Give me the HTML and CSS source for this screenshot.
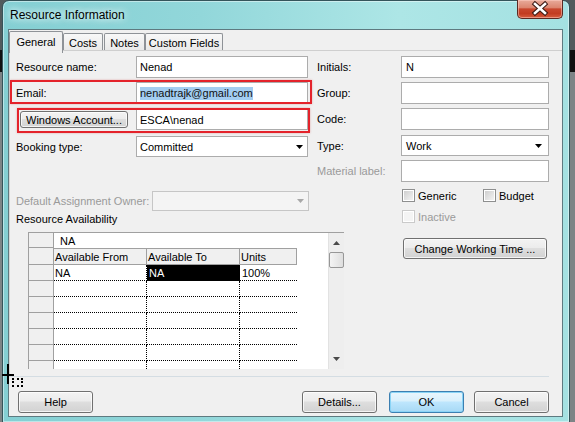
FILE: index.html
```html
<!DOCTYPE html>
<html>
<head>
<meta charset="utf-8">
<title>Resource Information</title>
<link rel="stylesheet" href="styles.css">
</head>
<body>
<div class="window">
  <div class="titlebar">
    <span class="title">Resource Information</span>
    <div class="close">
      <svg width="44" height="18" viewBox="0 0 44 18">
        <path d="M17 4 L27 13 M27 4 L17 13" stroke="#3b1a14" stroke-width="4.6" stroke-linecap="square" fill="none"/>
        <path d="M17 4 L27 13 M27 4 L17 13" stroke="#ffffff" stroke-width="2.6" stroke-linecap="square" fill="none"/>
      </svg>
    </div>
  </div>
  <div class="client">
    <div class="tabs">
      <div class="tab active t-gen">General</div>
      <div class="tab t-costs">Costs</div>
      <div class="tab t-notes">Notes</div>
      <div class="tab t-custom">Custom Fields</div>
    </div>
    <div class="panel">
      <div class="col-left">
        <div class="row r1"><span class="lbl">Resource name:</span><div class="field">Nenad</div></div>
        <div class="row r2 mark-email"><span class="lbl">Email:</span><div class="field"><span class="hl">nenadtrajk@gmail.com</span></div></div>
        <div class="row r3 mark-win"><button class="btn btn-win">Windows Account...</button><div class="field">ESCA\nenad</div></div>
        <div class="row r4"><span class="lbl">Booking type:</span><div class="field combo">Committed<svg class="arrow" width="7" height="4" viewBox="0 0 7 4"><polygon points="0,0 7,0 3.5,4" fill="#000"/></svg></div></div>
        <div class="row owner"><span class="lbl lbl-owner dis">Default Assignment Owner:</span><div class="field combo combo-dis"><svg class="arrow" width="7" height="4" viewBox="0 0 7 4"><polygon points="0,0 7,0 3.5,4" fill="#a8a8a8"/></svg></div></div>
        <div class="avail-lbl">Resource Availability</div>
        <div class="grid-wrap">
          <div class="grid">
            <div class="rh"></div><div class="edit">NA</div>
            <div class="rh"></div><div class="hd">Available From</div><div class="hd">Available To</div><div class="hd">Units</div><div class="blank"></div>
            <div class="rh"></div><div class="c">NA</div><div class="c cur">NA</div><div class="c u">100%</div><div class="blank"></div>
            <div class="rh"></div><div class="c"></div><div class="c"></div><div class="c u"></div><div class="blank"></div>
            <div class="rh"></div><div class="c"></div><div class="c"></div><div class="c u"></div><div class="blank"></div>
            <div class="rh"></div><div class="c"></div><div class="c"></div><div class="c u"></div><div class="blank"></div>
            <div class="rh"></div><div class="c"></div><div class="c"></div><div class="c u"></div><div class="blank"></div>
            <div class="rh"></div><div class="c"></div><div class="c"></div><div class="c u"></div><div class="blank"></div>
            <div class="rh"></div><div class="c"></div><div class="c"></div><div class="c u"></div><div class="blank"></div>
          </div>
          <div class="vscroll">
            <svg class="sc-up" width="7" height="4" viewBox="0 0 7 4"><polygon points="0,4 7,4 3.5,0" fill="#4a4a4a"/></svg>
            <div class="thumb"></div>
            <svg class="sc-down" width="7" height="4" viewBox="0 0 7 4"><polygon points="0,0 7,0 3.5,4" fill="#4a4a4a"/></svg>
          </div>
        </div>
      </div>
      <div class="col-right">
        <div class="rrow"><span class="rlbl">Initials:</span><div class="field rfield">N</div></div>
        <div class="rrow rr2"><span class="rlbl">Group:</span><div class="field rfield"></div></div>
        <div class="rrow rr3"><span class="rlbl">Code:</span><div class="field rfield"></div></div>
        <div class="rrow rr4"><span class="rlbl">Type:</span><div class="field rfield combo">Work<svg class="arrow arrow-r" width="7" height="4" viewBox="0 0 7 4"><polygon points="0,0 7,0 3.5,4" fill="#000"/></svg></div></div>
        <div class="rrow rr5"><span class="rlbl dis">Material label:</span><div class="field rfield"></div></div>
        <div class="chkrow">
          <div class="chkitem chk-generic"><span class="chk"></span><span class="chktxt">Generic</span></div>
          <div class="chkitem"><span class="chk"></span><span class="chktxt">Budget</span></div>
        </div>
        <div class="chkrow chkrow2">
          <div class="chkitem"><span class="chk chk-dis"></span><span class="chktxt dis">Inactive</span></div>
        </div>
        <button class="btn btn-cwt">Change Working Time ...</button>
      </div>
    </div>
    <div class="sep"></div>
    <div class="footer">
      <button class="btn btn-main">Help</button>
      <button class="btn btn-main btn-details">Details...</button>
      <button class="btn btn-main btn-ok">OK</button>
      <button class="btn btn-main btn-cancel">Cancel</button>
    </div>
  </div>
</div>
<div class="cursor">
  <div class="cross-v"></div>
  <div class="cross-h"></div>
  <div class="dotbox"></div>
</div>
</body>
</html>
```

FILE: styles.css
```css
* { box-sizing: border-box; }
html, body { margin: 0; padding: 0; }
body {
  width: 575px;
  height: 422px;
  overflow: hidden;
  position: relative;
  font-family: "Liberation Sans", Arial, sans-serif;
  font-size: 11px;
  color: #000;
  background: linear-gradient(#525a5c 0, #525a5c 50px, #111 50px, #111 72px, #7d8486 72px, #7d8486 100%);
}

.window {
  margin-left: 2px;
  width: 568px;
  height: 423px;
  border: 1px solid #34555b;
  border-radius: 7px 7px 0 0;
  padding: 0 6px 5px 5px;
  background: linear-gradient(90deg, #84cfd3 0%, #92d7da 35%, #ade6e6 70%, #a4e1e2 100%);
  box-shadow: inset 0 0 0 1px rgba(255, 255, 255, 0.45);
}

.titlebar {
  height: 28px;
  display: flex;
}
.title {
  align-self: center;
  margin-left: 2px;
  margin-top: -1px;
  font-size: 12px;
  text-shadow: 0 0 6px #eaffff, 0 0 10px #eaffff;
}
.close {
  margin-left: auto;
  margin-top: -1px;
  width: 46px;
  height: 19px;
  border: 1px solid #5a2a22;
  border-top: 0;
  border-radius: 0 0 5px 5px;
  background: linear-gradient(#e8ab9b 0%, #dc8670 42%, #c8472e 50%, #c23c21 75%, #d65d3e 100%);
  box-shadow: inset 0 0 0 1px rgba(255, 210, 200, 0.5);
}
.close svg { display: block; }

.client {
  height: 388px;
  border: 1px solid #5e7a80;
  background: #f0f0f0;
  display: flex;
  flex-direction: column;
}

/* tabs */
.tabs {
  height: 20px;
  display: flex;
  flex: none;
}
.tab {
  height: 17px;
  margin-top: 3px;
  padding-top: 1px;
  border: 1px solid #8e9297;
  border-bottom: 0;
  border-radius: 2px 2px 0 0;
  background: linear-gradient(#f8f8f8, #e9e9e9);
  display: flex;
  align-items: center;
  justify-content: center;
  white-space: nowrap;
}
.tab.active {
  height: 22px;
  margin-top: 1px;
  padding-top: 0;
  padding-bottom: 2px;
  background: #f0f0f0;
  position: relative;
  z-index: 1;
}
.t-gen { width: 54px; }
.t-costs { width: 40px; }
.t-notes { width: 41px; margin-left: 1px; }
.t-custom { width: 78px; }

/* panel */
.panel {
  flex: none;
  width: 553px;
  height: 326px;
  border-top: 1px solid #cfcfcf;
  border-left: 1px solid #d6d6d6;
  padding: 5px 0 0 6px;
  display: flex;
}
.col-left {
  width: 296px;
  flex: none;
  display: flex;
  flex-direction: column;
}
.col-right {
  width: 232px;
  margin-left: 5px;
  flex: none;
  display: flex;
  flex-direction: column;
}

.row {
  display: flex;
  align-items: center;
  width: 296px;
  flex: none;
}
.r1 { height: 22px; }
.r2 { height: 22px; margin-top: 4px; }
.r3 { height: 21px; margin-top: 5px; }
.r4 { height: 21px; margin-top: 6px; }
.owner { height: 20px; margin-top: 34px; }

.lbl {
  width: 120px;
  flex: none;
  line-height: 14px;
  white-space: nowrap;
}
.lbl-owner { width: 136px; }
.dis { color: #9a9a9a; }

.field {
  height: 100%;
  width: 172px;
  flex: none;
  border: 1px solid #acacac;
  background: #fff;
  display: flex;
  align-items: center;
  padding-left: 3px;
  white-space: nowrap;
}
.owner .field { width: 157px; }
.combo .arrow { margin-left: auto; margin-right: 4px; display: block; }
.combo .arrow-r { margin-right: 6px; }
.combo-dis { background: #f4f4f4; border-color: #c6c6c6; }

.hl {
  background: #a3cdf1;
  color: #111;
  line-height: 13px;
}

/* annotation boxes */
.mark-email, .mark-win { position: relative; }
.mark-email::after, .mark-win::after {
  content: "";
  position: absolute;
  border: 2px solid #e4232b;
  box-shadow: 0 0 2px rgba(200, 40, 40, 0.35);
  pointer-events: none;
}
.mark-email::after { left: -6px; right: 0; top: -2px; bottom: 0; }
.mark-win::after { left: 1px; right: 2px; top: -1px; bottom: -3px; }

.btn {
  font: inherit;
  color: #000;
  padding: 0;
  border: 1px solid #707070;
  border-radius: 3px;
  background: linear-gradient(#f3f3f3 0%, #ececec 45%, #dedede 50%, #d2d2d2 100%);
  box-shadow: inset 0 0 0 1px rgba(255, 255, 255, 0.75);
  white-space: nowrap;
}
.btn-win {
  width: 108px;
  height: 17px;
  margin-left: 4px;
  margin-right: 8px;
  flex: none;
}

.avail-lbl {
  margin-top: 1px;
  line-height: 14px;
}

/* grid */
.grid-wrap {
  margin-top: 6px;
  margin-left: 12px;
  width: 316px;
  height: 137px;
  flex: none;
  display: flex;
  border-top: 1px solid #a0a0a0;
  border-left: 1px solid #a0a0a0;
}
.grid {
  flex: 1;
  display: grid;
  grid-template-columns: 25px 93px 93px 57px 1fr;
  grid-template-rows: 15px 17px;
  grid-auto-rows: 16px;
  align-content: start;
  overflow: hidden;
  background: #fff;
}
.rh {
  background: #f0f0f0;
  border-right: 1px solid #a0a0a0;
  border-bottom: 1px solid #a0a0a0;
}
.edit {
  grid-column: 2 / -1;
  padding-left: 6px;
  display: flex;
  align-items: center;
}
.hd {
  background: #f0f0f0;
  border-top: 1px solid #a0a0a0;
  border-right: 1px solid #a0a0a0;
  border-bottom: 1px solid #a0a0a0;
  padding-left: 1px;
  display: flex;
  align-items: center;
  white-space: nowrap;
  overflow: hidden;
}
.c {
  border-right: 1px dotted #000;
  border-bottom: 1px dotted #000;
  padding-left: 1px;
  display: flex;
  align-items: center;
}
.c.u { border-right: 0; padding-left: 2px; }
.c.cur { background: #000; color: #fff; padding-left: 2px; }
.blank { background: #fff; }

.vscroll {
  width: 16px;
  flex: none;
  background: #eeeeee;
  border-left: 1px solid #e2e2e2;
  display: flex;
  flex-direction: column;
  align-items: center;
}
.vscroll svg { display: block; }
.sc-up { margin-top: 8px; }
.thumb {
  margin-top: 7px;
  width: 15px;
  height: 16px;
  margin-left: -1px;
  border: 1px solid #979797;
  border-radius: 2px;
  background: linear-gradient(90deg, #f4f4f4, #dedede);
}
.sc-down { margin-top: auto; margin-bottom: 8px; }

/* right column */
.rrow {
  display: flex;
  align-items: center;
  height: 22px;
  flex: none;
}
.rr2 { margin-top: 4px; }
.rr3 { margin-top: 4px; }
.rr4 { margin-top: 5px; height: 21px; }
.rr5 { margin-top: 4px; }
.rlbl {
  width: 84px;
  flex: none;
  line-height: 14px;
  white-space: nowrap;
}
.rfield { width: 148px; padding-left: 4px; }

.chkrow {
  display: flex;
  margin-top: 7px;
  margin-left: 85px;
  height: 13px;
  flex: none;
}
.chkrow2 { margin-top: 8px; }
.chkitem {
  display: flex;
  align-items: center;
}
.chk-generic { width: 81px; }
.chk {
  width: 13px;
  height: 13px;
  flex: none;
  border: 1px solid #8e8f8f;
  background: linear-gradient(135deg, #cbcbcb, #f6f6f6);
  box-shadow: inset 0 0 0 1px #ffffff;
}
.chk-dis {
  border-color: #cacaca;
  background: #f4f4f4;
}
.chktxt {
  margin-left: 3px;
  line-height: 14px;
}

.btn-cwt {
  margin-top: 15px;
  margin-left: 86px;
  width: 144px;
  height: 21px;
  flex: none;
}

.sep {
  flex: none;
  width: 540px;
  height: 1px;
  background: #d4dde3;
}

.footer {
  display: flex;
  padding: 14px 13px 0 9px;
}
.btn-main {
  width: 75px;
  height: 22px;
  flex: none;
}
.btn-details { margin-left: auto; }
.btn-ok {
  margin-left: 12px;
  border-color: #3c7fb1;
  background: linear-gradient(#eaf6fd 0%, #d9f0fc 45%, #bee6fd 50%, #a7d9f5 100%);
  box-shadow: inset 0 0 0 1px #8ad4f6;
}
.btn-cancel { margin-left: 10px; }

/* mouse cursor overlay */
.cursor { position: absolute; left: 0; top: 0; }
.cross-v {
  position: absolute;
  left: 7px;
  top: 364px;
  width: 2px;
  height: 20px;
  background: #000;
}
.cross-h {
  position: absolute;
  left: 2px;
  top: 374px;
  width: 12px;
  height: 2px;
  background: #000;
}
.dotbox {
  position: absolute;
  left: 12px;
  top: 378px;
  width: 11px;
  height: 9px;
  border: 2px dotted #000;
}
```
